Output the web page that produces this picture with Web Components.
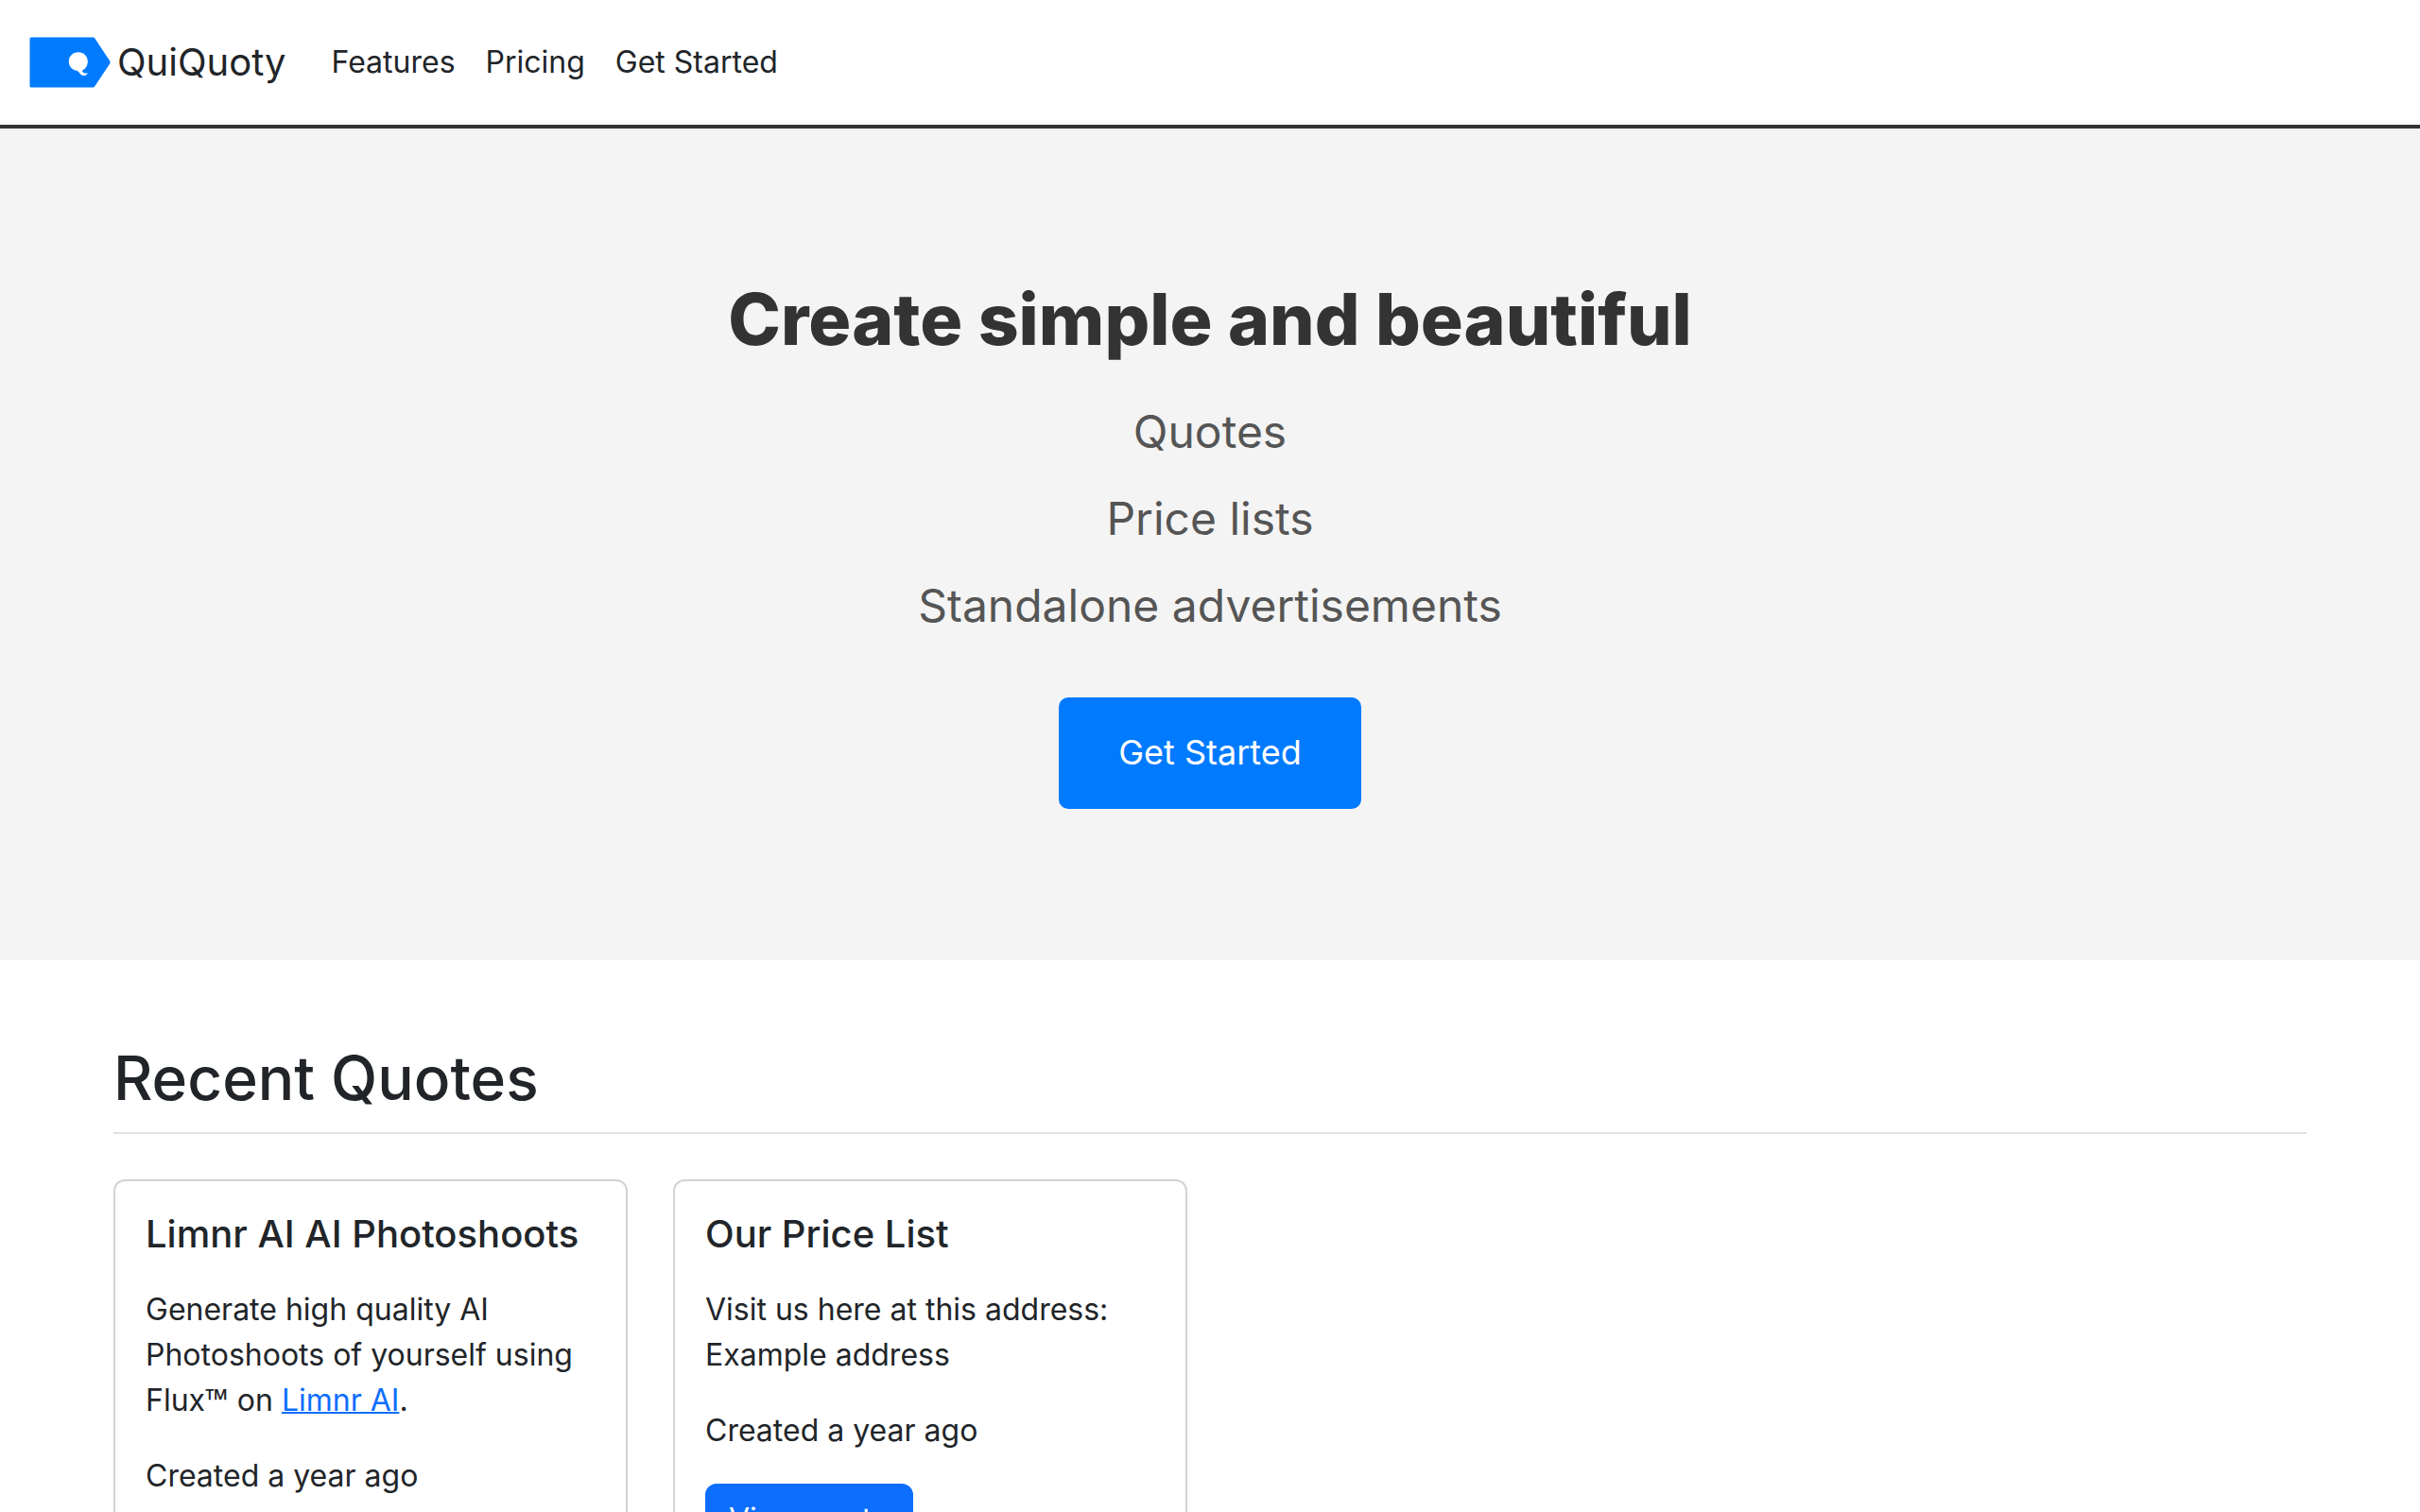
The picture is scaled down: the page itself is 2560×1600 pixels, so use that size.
<!DOCTYPE html>
<html lang="en">
<head>
<meta charset="utf-8">
<meta name="viewport" content="width=device-width, initial-scale=1">
<title>QuiQuoty</title>
<style>
  body {
    margin: 0;
    background: #fff;
    color: #212529;
    font: 400 32px/48px Inter, "Liberation Sans", sans-serif;
  }
</style>
</head>
<body>
<quoty-app></quoty-app>

<template id="tpl-app">
  <style>
    :host { display: block; }
    p { margin: 0; }
    a { color: #0d6efd; text-decoration-thickness: 2px; }
    .tm { font-family: "Noto Sans", sans-serif; line-height: 1; }
  </style>
  <quoty-nav>
    <quoty-nav-link href="#features">Features</quoty-nav-link>
    <quoty-nav-link href="#pricing">Pricing</quoty-nav-link>
    <quoty-nav-link href="#start">Get Started</quoty-nav-link>
  </quoty-nav>
  <main>
    <quoty-hero heading="Create simple and beautiful" action="Get Started">
      <p>Quotes</p>
      <p>Price lists</p>
      <p>Standalone advertisements</p>
    </quoty-hero>
    <quoty-section heading="Recent Quotes">
      <quoty-card heading="Limnr AI AI Photoshoots" created="Created a year ago">
        <p>Generate high quality AI Photoshoots of yourself using Flux<span class="tm">™</span> on <a href="#limnr">Limnr AI</a>.</p>
      </quoty-card>
      <quoty-card heading="Our Price List" created="Created a year ago">
        <p>Visit us here at this address: Example address</p>
      </quoty-card>
    </quoty-section>
  </main>
</template>

<template id="tpl-nav">
  <style>
    :host { display: block; background: #fff; border-bottom: 4px solid #333; }
    nav { display: flex; align-items: center; gap: 48px; min-height: 132px; padding: 0 31px; box-sizing: border-box; }
    .brand { display: flex; align-items: center; gap: 7px; color: inherit; text-decoration: none; font-size: 40px; line-height: 60px; }
    svg { display: block; width: 86px; height: 54px; }
    .links { display: flex; gap: 32px; }
  </style>
  <nav aria-label="Main">
    <a class="brand" href="#home">
      <svg viewBox="0 0 86 54" aria-hidden="true">
        <path d="M2 0.5H67.5Q68.600 0.5 69.300 1.500L85.300 25.800Q86 27 85.300 28.200L69.300 52.300Q68.600 53.500 67.500 53.500H2Q0.500 53.500 0.500 52V2Q0.500 0.500 2 0.500Z" fill="#007bff"/>
        <path d="M51.800 16.300C57.500 16.300 61.800 20.500 61.800 26C61.800 30.700 59.300 34.200 55.800 35.700C56.400 37.300 57.500 38.500 59 38.500C60 38.500 60.800 38.200 61.800 37.900C61.200 40 59.500 41 57.500 41C54 41 53.300 37.300 50.500 35.800C45.300 35.300 41.800 31.300 41.800 26C41.800 20.500 46.200 16.300 51.800 16.300Z" fill="#fff"/>
      </svg>
      <span>QuiQuoty</span>
    </a>
    <div class="links"><slot></slot></div>
  </nav>
</template>

<template id="tpl-nav-link">
  <style>
    :host { display: block; }
    a { display: block; color: inherit; text-decoration: none; }
  </style>
  <a><slot></slot></a>
</template>

<template id="tpl-hero">
  <style>
    :host { display: block; background: #f4f4f4; }
    section { display: flex; flex-direction: column; align-items: center; padding: 159px 40px 160px; text-align: center; }
    h1 { margin: 0 0 40px; color: #333; font-size: 75px; line-height: 86px; font-weight: 800; }
    .lines { display: flex; flex-direction: column; gap: 20px; margin-bottom: 61px; color: #555; font-size: 48px; line-height: 72px; }
    button { margin: 0; padding: 31px 63px 33px; border: 0; border-radius: 10px; background: #007bff; color: #fff; font: inherit; font-size: 36px; line-height: 54px; cursor: pointer; }
  </style>
  <section>
    <h1></h1>
    <div class="lines"><slot></slot></div>
    <button type="button"></button>
  </section>
</template>

<template id="tpl-section">
  <style>
    :host { display: block; padding: 86px 120px 96px; }
    h2 { margin: 0 0 48px; padding-bottom: 18px; border-bottom: 2px solid #dee2e6; font-size: 64px; line-height: 78px; font-weight: 500; }
    .grid { display: grid; grid-template-columns: repeat(4, minmax(0, 1fr)); gap: 48px; }
  </style>
  <section>
    <h2></h2>
    <div class="grid"><slot></slot></div>
  </section>
</template>

<template id="tpl-card">
  <style>
    :host { display: block; }
    article { display: flex; flex-direction: column; align-items: flex-start; gap: 32px; box-sizing: border-box; height: 100%; padding: 32px; border: 2px solid #d3d3d3; border-radius: 12px; background: #fff; }
    h3 { margin: 0; font-size: 40px; line-height: 48px; font-weight: 500; }
    p { margin: 0; }
    button { margin: 0; padding: 12px 23px; border: 2px solid #0d6efd; border-radius: 12px; background: #0d6efd; color: #fff; font: inherit; cursor: pointer; }
  </style>
  <article>
    <h3></h3>
    <slot></slot>
    <p class="created"></p>
    <button type="button">View quote</button>
  </article>
</template>

<script>
  class QuotyElement extends HTMLElement {
    constructor() {
      super();
      const tpl = document.getElementById(this.constructor.template);
      this.attachShadow({ mode: "open" }).append(tpl.content.cloneNode(true));
    }
    fill(selector, attribute) {
      this.shadowRoot.querySelector(selector).textContent = this.getAttribute(attribute) || "";
    }
  }

  customElements.define("quoty-nav-link", class extends QuotyElement {
    static template = "tpl-nav-link";
    connectedCallback() {
      this.shadowRoot.querySelector("a").href = this.getAttribute("href");
    }
  });
  customElements.define("quoty-nav", class extends QuotyElement {
    static template = "tpl-nav";
  });
  customElements.define("quoty-hero", class extends QuotyElement {
    static template = "tpl-hero";
    connectedCallback() {
      this.fill("h1", "heading");
      this.fill("button", "action");
    }
  });
  customElements.define("quoty-card", class extends QuotyElement {
    static template = "tpl-card";
    connectedCallback() {
      this.fill("h3", "heading");
      this.fill(".created", "created");
    }
  });
  customElements.define("quoty-section", class extends QuotyElement {
    static template = "tpl-section";
    connectedCallback() {
      this.fill("h2", "heading");
    }
  });
  customElements.define("quoty-app", class extends QuotyElement {
    static template = "tpl-app";
  });
</script>
</body>
</html>
